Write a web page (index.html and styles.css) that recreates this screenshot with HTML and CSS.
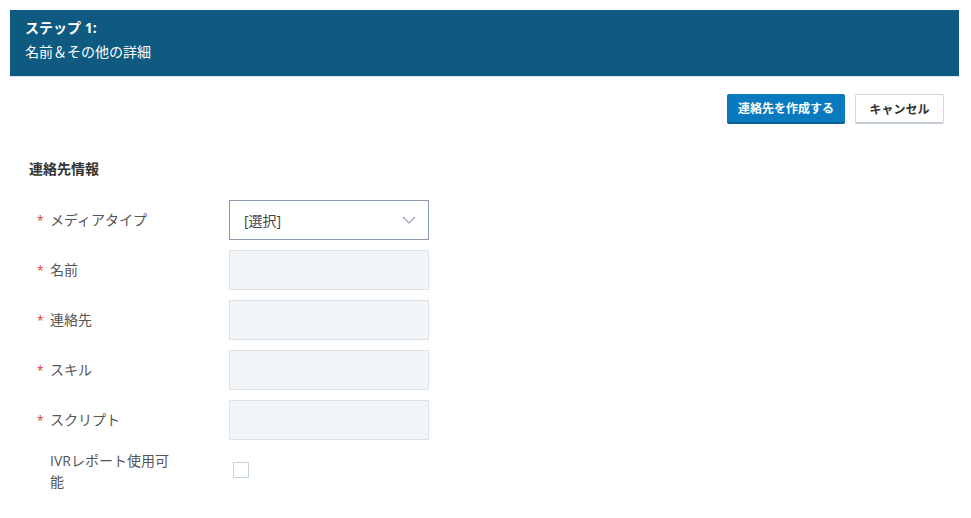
FILE: index.html
```html
<!DOCTYPE html>
<html lang="ja">
<head>
  <meta charset="UTF-8" />
  <title>連絡先を作成</title>
  <link rel="stylesheet" href="styles.css">
</head>
<body>

  <!-- Step header -->
  <div class="step-header">
    <div class="step-title">ステップ 1:</div>
    <div class="step-sub">名前＆その他の詳細</div>
  </div>

  <div class="actions">
    <button class="btn btn-primary">連絡先を作成する</button>
    <button class="btn btn-cancel">キャンセル</button>
  </div>

  <div class="section">
    <h3 class="section-title">連絡先情報</h3>

    <div class="form-row">
      <label class="field-label"><span class="req">*</span>メディアタイプ</label>
      <div class="select">
        <span>[選択]</span>
        <svg width="14" height="8" viewBox="0 0 14 8"><path d="M1 1l6 6 6-6" fill="none" stroke="#98a4b3" stroke-width="1.2"/></svg>
      </div>
    </div>

    <div class="form-row">
      <label class="field-label"><span class="req">*</span>名前</label>
      <input class="input" type="text">
    </div>

    <div class="form-row">
      <label class="field-label"><span class="req">*</span>連絡先</label>
      <input class="input" type="text">
    </div>

    <div class="form-row">
      <label class="field-label"><span class="req">*</span>スキル</label>
      <input class="input" type="text">
    </div>

    <div class="form-row">
      <label class="field-label"><span class="req">*</span>スクリプト</label>
      <input class="input" type="text">
    </div>

    <div class="form-row">
      <label class="field-label">IVRレポート使用可能</label>
      <span class="checkbox"></span>
    </div>
  </div>

</body>
</html>
```

FILE: styles.css
```css
* {
  margin: 0;
  padding: 0;
  box-sizing: border-box;
  font-family: "Open Sans", "Noto Sans CJK JP", sans-serif;
}

body {
  margin: 10px 12px 0 10px;
  background: #fff;
  color: #444;
}

/* Header band */
.step-header {
  background: #0e5a80;
  color: #fff;
  height: 67px;
  padding: 8px 15px;
  border-bottom: 1px solid #d6e6f0;
}

.step-title {
  font-size: 14px;
  font-weight: bold;
  line-height: 20px;
}

.step-sub {
  font-size: 14px;
  line-height: 20px;
  margin-top: 4px;
}

/* Buttons */
.actions {
  display: flex;
  justify-content: flex-end;
  gap: 10px;
  margin-top: 17px;
  padding-right: 15px;
}

.btn {
  height: 30px;
  font-size: 12px;
  font-weight: bold;
  border-radius: 2px;
  cursor: pointer;
}

.btn-primary {
  width: 118px;
  background: #0a7abf;
  color: #fff;
  border: none;
  border-bottom: 2px solid #0a5d92;
}

.btn-cancel {
  width: 89px;
  background: #fff;
  color: #333;
  border: 1px solid #d0d7de;
  border-bottom: 2px solid #c3ccd5;
}

/* Form section */
.section {
  padding-left: 19px;
  margin-top: 35px;
}

.section-title {
  font-size: 14px;
  font-weight: bold;
  color: #333;
  line-height: 20px;
  margin-bottom: 21px;
}

.form-row {
  display: flex;
  align-items: center;
  margin-bottom: 10px;
}

.field-label {
  width: 200px;
  padding-left: 21px;
  padding-right: 55px;
  font-size: 14px;
  color: #555;
  line-height: 21px;
}

.req {
  color: #e0362c;
  font-size: 12px;
  margin-right: 6px;
  margin-left: -13px;
  display: inline-block;
  width: 7px;
}

.select {
  width: 200px;
  height: 40px;
  border: 1px solid #8a9bb0;
  display: flex;
  align-items: center;
  justify-content: space-between;
  padding: 0 12px 0 14px;
  font-size: 14px;
  color: #444;
}

.input {
  width: 200px;
  height: 40px;
  background: #f2f6f9;
  border: 1px solid #dce3e8;
  outline: none;
}

.checkbox {
  display: inline-block;
  width: 16px;
  height: 16px;
  border: 1px solid #c5d3db;
  margin-left: 4px;
  margin-top: -2px;
}
```
